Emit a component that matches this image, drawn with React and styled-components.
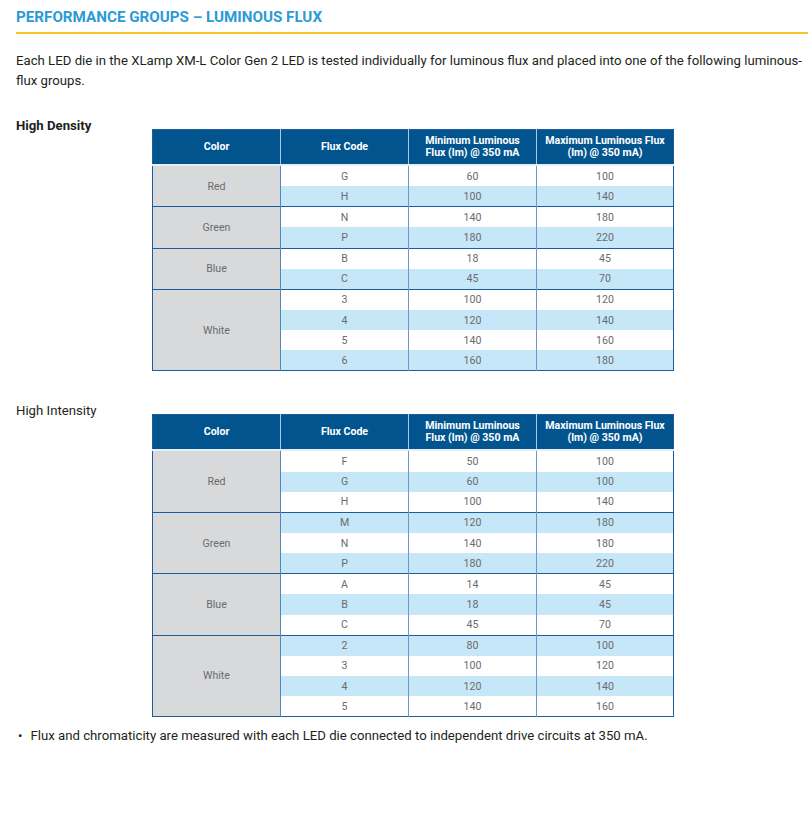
import styled, { createGlobalStyle } from 'styled-components';

const GlobalStyle = createGlobalStyle`
  body {
    margin: 0;
    background: #fff;
    font-family: Roboto, "Liberation Sans", Arial, sans-serif;
  }
`;

const Page = styled.div`
  padding: 7px 4px 40px 16px;
  width: 812px;
  box-sizing: border-box;
`;

const Heading = styled.h2`
  margin: 0;
  padding-bottom: 5px;
  border-bottom: 2px solid #f6c52a;
  font-size: 15.2px;
  line-height: 20px;
  font-weight: 700;
  color: #2b9ad6;
`;

const Intro = styled.p`
  margin: 17px 0 0;
  font-size: 13.2px;
  line-height: 20px;
  color: #231f20;
`;

const Section = styled.div`
  display: flex;
  align-items: flex-start;
  margin-top: ${(p) => p.$gap}px;
`;

const Label = styled.div`
  width: 136px;
  flex-shrink: 0;
  font-size: 13.2px;
  line-height: 20px;
  color: #231f20;
  font-weight: ${(p) => (p.$bold ? 700 : 400)};
`;

const Table = styled.table`
  margin-top: 13px;
  width: 521px;
  table-layout: fixed;
  border-collapse: collapse;
  border: 1.5px solid #1b5d9e;
  font-size: 10.6px;
  text-align: center;
`;

const HeadCell = styled.th`
  height: 34px;
  padding: 0 6px;
  background: #02548f;
  color: #fff;
  font-weight: 700;
  line-height: 12px;
  border-left: 1px solid #a9c8e6;
  border-bottom: 2px solid #e6eef6;
  &:first-child {
    border-left: none;
  }
`;

const GroupCell = styled.td`
  background: #d8d9db;
  color: #6b6b6e;
  border-top: 1.5px solid #1b5d9e;
  border-right: 1.5px solid #4f86bb;
  vertical-align: middle;
`;

const Cell = styled.td`
  height: 20.15px;
  padding: 0;
  color: #6b6b6e;
  background: ${(p) => (p.$blue ? '#c5e7f8' : '#fff')};
  border-left: ${(p) => (p.$lead ? '1.5px solid #4f86bb' : '1px solid #6f98c2')};
  border-top: ${(p) => (p.$first ? '1.5px solid #1b5d9e' : 'none')};
`;

const Note = styled.div`
  display: flex;
  gap: 8px;
  margin-top: 9px;
  font-size: 13.2px;
  line-height: 20px;
  color: #231f20;
`;

const Bullet = styled.span`
  padding-left: 2px;
`;

const highDensity = [
  ['Red', [['G', 60, 100], ['H', 100, 140]]],
  ['Green', [['N', 140, 180], ['P', 180, 220]]],
  ['Blue', [['B', 18, 45], ['C', 45, 70]]],
  ['White', [['3', 100, 120], ['4', 120, 140], ['5', 140, 160], ['6', 160, 180]]],
];

const highIntensity = [
  ['Red', [['F', 50, 100], ['G', 60, 100], ['H', 100, 140]]],
  ['Green', [['M', 120, 180], ['N', 140, 180], ['P', 180, 220]]],
  ['Blue', [['A', 14, 45], ['B', 18, 45], ['C', 45, 70]]],
  ['White', [['2', 80, 100], ['3', 100, 120], ['4', 120, 140], ['5', 140, 160]]],
];

function FluxTable({ groups }) {
  let index = 0;
  return (
    <Table>
      <colgroup>
        <col style={{ width: 128 }} />
        <col style={{ width: 128 }} />
        <col style={{ width: 128 }} />
        <col style={{ width: 137 }} />
      </colgroup>
      <thead>
        <tr>
          <HeadCell>Color</HeadCell>
          <HeadCell>Flux Code</HeadCell>
          <HeadCell>Minimum Luminous Flux (lm) @ 350 mA</HeadCell>
          <HeadCell>Maximum Luminous Flux (lm) @ 350 mA)</HeadCell>
        </tr>
      </thead>
      <tbody>
        {groups.map(([color, rows]) =>
          rows.map(([code, min, max], i) => {
            const blue = index++ % 2 === 1;
            const first = i === 0;
            return (
              <tr key={color + code}>
                {first && <GroupCell rowSpan={rows.length}>{color}</GroupCell>}
                <Cell $blue={blue} $first={first} $lead>{code}</Cell>
                <Cell $blue={blue} $first={first}>{min}</Cell>
                <Cell $blue={blue} $first={first}>{max}</Cell>
              </tr>
            );
          })
        )}
      </tbody>
    </Table>
  );
}

export default function App() {
  return (
    <Page>
      <GlobalStyle />
      <Heading>PERFORMANCE GROUPS – LUMINOUS FLUX</Heading>
      <Intro>
        Each LED die in the XLamp XM-L Color Gen 2 LED is tested individually for luminous flux and placed into one of the following luminous-flux groups.
      </Intro>
      <Section $gap={25}>
        <Label $bold>High Density</Label>
        <FluxTable groups={highDensity} />
      </Section>
      <Section $gap={30}>
        <Label>High Intensity</Label>
        <FluxTable groups={highIntensity} />
      </Section>
      <Note>
        <Bullet>•</Bullet>
        <span>Flux and chromaticity are measured with each LED die connected to independent drive circuits at 350 mA.</span>
      </Note>
    </Page>
  );
}
